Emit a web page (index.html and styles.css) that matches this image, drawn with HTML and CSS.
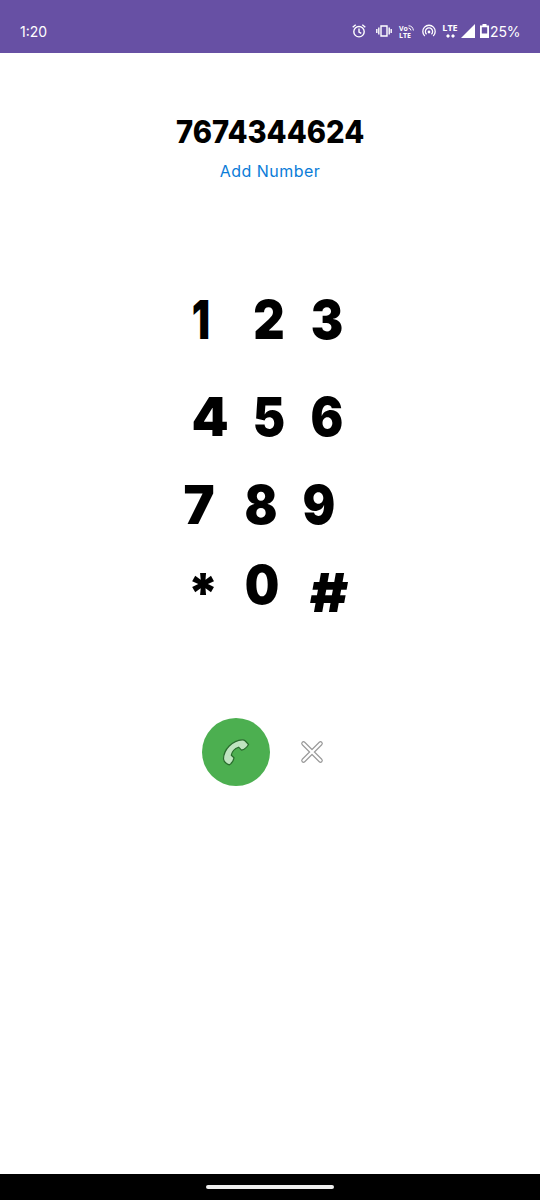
FILE: index.html
```html
<!DOCTYPE html>
<html lang="en">
<head>
<meta charset="utf-8">
<title>Dialer</title>
<link rel="stylesheet" href="styles.css">
</head>
<body>
<div class="phone">
  <header class="status">
    <span class="clock">1:20</span>
    <div class="indicators">
      <svg class="alarm" width="14" height="16" viewBox="0 0 14 16" fill="none" stroke="currentColor" stroke-width="1.4"><circle cx="7" cy="8.700" r="5.200"/><path d="M7 5.400v3.600l2.300 1.400M.7 4.200l3-2.500M13.300 4.200l-3-2.500"/></svg>
      <svg class="vibrate" width="16" height="14" viewBox="0 0 16 14" fill="none" stroke="currentColor" stroke-width="1.4"><path d="M5 2h6v10H5zM2.800 3.500v7M.8 5v4M13.200 3.500v7M15.200 5v4"/></svg>
      <span class="volte"><span class="vo">Vo<svg width="6" height="6" viewBox="0 0 6 6" fill="none" stroke="currentColor" stroke-width="1"><path d="M.5.8Q4.800.8 5.400 5.500M.5 3Q2.600 3 3 5.500"/></svg></span><span>LTE</span></span>
      <svg class="hotspot" width="14" height="14" viewBox="0 0 14 14" fill="none" stroke="currentColor" stroke-width="1.3"><path d="M2.800 12A6.200 6.200 0 1 1 11.200 12M4.600 10.200A3.600 3.600 0 1 1 9.400 10.200"/><circle cx="7" cy="8" r="1.400" fill="currentColor" stroke="none"/></svg>
      <span class="lte">LTE<svg width="9" height="4" viewBox="0 0 9 4" fill="currentColor"><path d="M0 2l2-2 2 2-2 2zM5 2l2-2 2 2-2 2z"/></svg></span>
      <svg class="signal" width="14" height="14" viewBox="0 0 14 14"><path d="M14 0v14H0z" fill="currentColor"/></svg>
      <svg class="battery" width="9" height="14" viewBox="0 0 9 14"><path fill="currentColor" fill-rule="evenodd" d="M2.500 0h4v1.500H9V14H0V1.500h2.500zM1.800 3.200v6.300h5.400v-6.300z"/></svg>
      <span class="percent">25%</span>
    </div>
  </header>
  <main class="dialer">
    <h1 class="number">7674344624</h1>
    <a class="add">Add Number</a>
    <div class="keypad">
      <div class="row row-one"><span class="key one">1</span><span class="key">2</span><span class="key">3</span></div>
      <div class="row row-four"><span class="key four">4</span><span class="key">5</span><span class="key">6</span></div>
      <div class="row row-seven"><span class="key seven">7</span><span class="key">8</span><span class="key">9</span></div>
      <div class="row row-star"><span class="key star">*</span><span class="key">0</span><span class="key hash">#</span></div>
    </div>
    <div class="actions">
      <div class="call"><svg width="28" height="28" viewBox="0 0 28 28"><path d="M1.500 21C1.500 11.500 10.500 2.200 20.300 1.800Q22 1.700 23.300 3L26.500 6.500Q24 11 19.500 12.200L16.600 9.200C12.500 10.500 10 13.500 9.300 17.200L12 19.800Q11.200 24.500 7.500 26.800Q6 26.500 4.500 25.500C2.500 24 1.600 23 1.500 21Z" fill="#bfe4c0" stroke="#286b2c" stroke-width="1.200" stroke-linejoin="round"/></svg></div>
      <svg class="clear" width="24" height="24" viewBox="0 0 24 24" stroke-linecap="round"><path d="M3.500 3.500l17 17M20.500 3.500L3.500 20.500" stroke="#999" stroke-width="4.600"/><path d="M3.500 3.500l17 17M20.500 3.500L3.500 20.500" stroke="#fff" stroke-width="2.300"/></svg>
    </div>
  </main>
  <footer class="navbar"><div class="handle"></div></footer>
</div>
</body>
</html>
```
FILE: styles.css
```css
* { box-sizing: border-box; }
body { margin: 0; background: #fff; font-family: Inter, sans-serif; }
.phone { width: 540px; height: 1200px; display: flex; flex-direction: column; }
.status { height: 53px; background: #6750a4; color: #fff; display: flex; justify-content: space-between; padding: 22px 20px 0 20px; line-height: 20px; font-size: 14px; }
.indicators { display: flex; align-items: flex-start; }
.indicators svg { display: block; flex: none; }
.alarm { margin: 1px 10px 0 0; }
.vibrate { margin: 2px 7px 0 0; }
.volte { width: 16px; margin: 3px 7px 0 0; font: bold 7px/7px "Open Sans", sans-serif; display: flex; flex-direction: column; }
.vo { display: flex; }
.hotspot { margin: 2px 6px 0 0; }
.lte { width: 16px; margin: 2px 3px 0 0; font: bold 9px/8px "Open Sans", sans-serif; display: flex; flex-direction: column; align-items: center; }
.lte svg { margin-top: 2px; }
.signal { margin: 2px 5px 0 0; }
.battery { margin: 2px 1px 0 0; }
.percent { width: 30px; letter-spacing: -0.1px; white-space: nowrap; }
.dialer { flex: 1; display: flex; flex-direction: column; align-items: center; }
.number { margin: 59px 0 0; font-size: 31px; line-height: 40px; font-weight: 850; transform: scaleX(.94); }
.add { margin-top: 9px; color: #0a7cd8; font-size: 16px; line-height: 20px; letter-spacing: 0.45px; }
.keypad { width: 100%; margin-top: 102px; }
.row { display: flex; height: 74px; font-size: 54px; line-height: 74px; font-weight: 900; }
.key { width: 58px; text-align: center; transform: scaleX(.9); }
.row-one { padding-left: 172px; }
.row-one .one { margin-right: 10px; transform: scaleX(.75); }
.row-four { padding-left: 181px; margin-top: 23px; }
.row-four .four { margin-right: 1px; transform: scaleX(.98); }
.row-seven { padding-left: 170px; margin-top: 14px; }
.row-seven .seven { margin-right: 4px; transform: scaleX(.97); }
.row-star { padding-left: 174px; margin-top: 6px; }
.row-star .star { margin: 8px 1px 0 0; transform: scaleX(.98); }
.row-star .hash { margin: 8px 0 0 9px; transform: scaleX(1.08); }
.actions { width: 100%; margin-top: 96px; padding-left: 202px; display: flex; align-items: center; }
.call { width: 68px; height: 68px; border-radius: 50%; background: #4caf50; display: flex; align-items: center; justify-content: center; }
.clear { margin-left: 30px; }
.navbar { height: 26px; background: #000; padding-top: 11px; }
.handle { width: 128px; height: 4px; margin: 0 auto; border-radius: 2px; background: #eee; }
```
